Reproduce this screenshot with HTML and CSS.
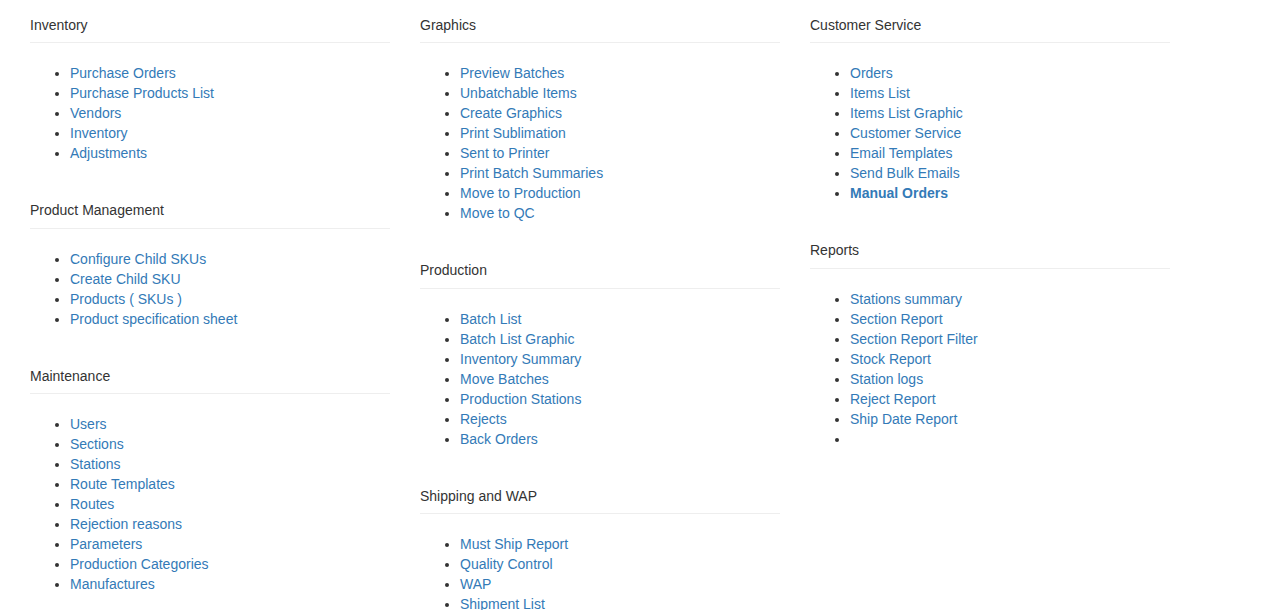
FILE: index.html
```html
<!DOCTYPE html>
<html>
<head>
<meta charset="utf-8">
<link rel="stylesheet" href="styles.css">
</head>
<body>
<div class="container">
  <div class="col">
    <div class="section">
      <div class="heading">Inventory</div>
      <ul class="links">
        <li><a href="#">Purchase Orders</a></li>
        <li><a href="#">Purchase Products List</a></li>
        <li><a href="#">Vendors</a></li>
        <li><a href="#">Inventory</a></li>
        <li><a href="#">Adjustments</a></li>
      </ul>
    </div>
    <div class="section">
      <div class="heading">Product Management</div>
      <ul class="links">
        <li><a href="#">Configure Child SKUs</a></li>
        <li><a href="#">Create Child SKU</a></li>
        <li><a href="#">Products ( SKUs )</a></li>
        <li><a href="#">Product specification sheet</a></li>
      </ul>
    </div>
    <div class="section">
      <div class="heading">Maintenance</div>
      <ul class="links">
        <li><a href="#">Users</a></li>
        <li><a href="#">Sections</a></li>
        <li><a href="#">Stations</a></li>
        <li><a href="#">Route Templates</a></li>
        <li><a href="#">Routes</a></li>
        <li><a href="#">Rejection reasons</a></li>
        <li><a href="#">Parameters</a></li>
        <li><a href="#">Production Categories</a></li>
        <li><a href="#">Manufactures</a></li>
      </ul>
    </div>
  </div>
  <div class="col">
    <div class="section">
      <div class="heading">Graphics</div>
      <ul class="links">
        <li><a href="#">Preview Batches</a></li>
        <li><a href="#">Unbatchable Items</a></li>
        <li><a href="#">Create Graphics</a></li>
        <li><a href="#">Print Sublimation</a></li>
        <li><a href="#">Sent to Printer</a></li>
        <li><a href="#">Print Batch Summaries</a></li>
        <li><a href="#">Move to Production</a></li>
        <li><a href="#">Move to QC</a></li>
      </ul>
    </div>
    <div class="section">
      <div class="heading">Production</div>
      <ul class="links">
        <li><a href="#">Batch List</a></li>
        <li><a href="#">Batch List Graphic</a></li>
        <li><a href="#">Inventory Summary</a></li>
        <li><a href="#">Move Batches</a></li>
        <li><a href="#">Production Stations</a></li>
        <li><a href="#">Rejects</a></li>
        <li><a href="#">Back Orders</a></li>
      </ul>
    </div>
    <div class="section">
      <div class="heading">Shipping and WAP</div>
      <ul class="links">
        <li><a href="#">Must Ship Report</a></li>
        <li><a href="#">Quality Control</a></li>
        <li><a href="#">WAP</a></li>
        <li><a href="#">Shipment List</a></li>
      </ul>
    </div>
  </div>
  <div class="col">
    <div class="section">
      <div class="heading">Customer Service</div>
      <ul class="links">
        <li><a href="#">Orders</a></li>
        <li><a href="#">Items List</a></li>
        <li><a href="#">Items List Graphic</a></li>
        <li><a href="#">Customer Service</a></li>
        <li><a href="#">Email Templates</a></li>
        <li><a href="#">Send Bulk Emails</a></li>
        <li><a href="#" class="strong">Manual Orders</a></li>
      </ul>
    </div>
    <div class="section">
      <div class="heading">Reports</div>
      <ul class="links">
        <li><a href="#">Stations summary</a></li>
        <li><a href="#">Section Report</a></li>
        <li><a href="#">Section Report Filter</a></li>
        <li><a href="#">Stock Report</a></li>
        <li><a href="#">Station logs</a></li>
        <li><a href="#">Reject Report</a></li>
        <li><a href="#">Ship Date Report</a></li>
        <li></li>
      </ul>
    </div>
  </div>
</div>
</body>
</html>
```

FILE: styles.css
```css
html, body {
  margin: 0;
  padding: 0;
  background: #fff;
}
body {
  font-family: "Liberation Sans", Arial, sans-serif;
  font-size: 14px;
  line-height: 20px;
  color: #333;
}
.container {
  display: flex;
  padding: 15px 15px 0 15px;
}
.col {
  width: 360px;
  padding: 0 15px;
  flex: none;
}
.section {
  margin-bottom: 37px;
}
.heading {
  padding-bottom: 7px;
  border-bottom: 1px solid #eee;
}
.section:nth-child(2) .heading {
  padding-bottom: 8px;
}
.links {
  margin: 20px 0 0 0;
  padding-left: 40px;
}
.links li {
  min-height: 20px;
}
.links a {
  color: #337ab7;
  text-decoration: none;
}
.links a.strong {
  font-weight: bold;
}
```
